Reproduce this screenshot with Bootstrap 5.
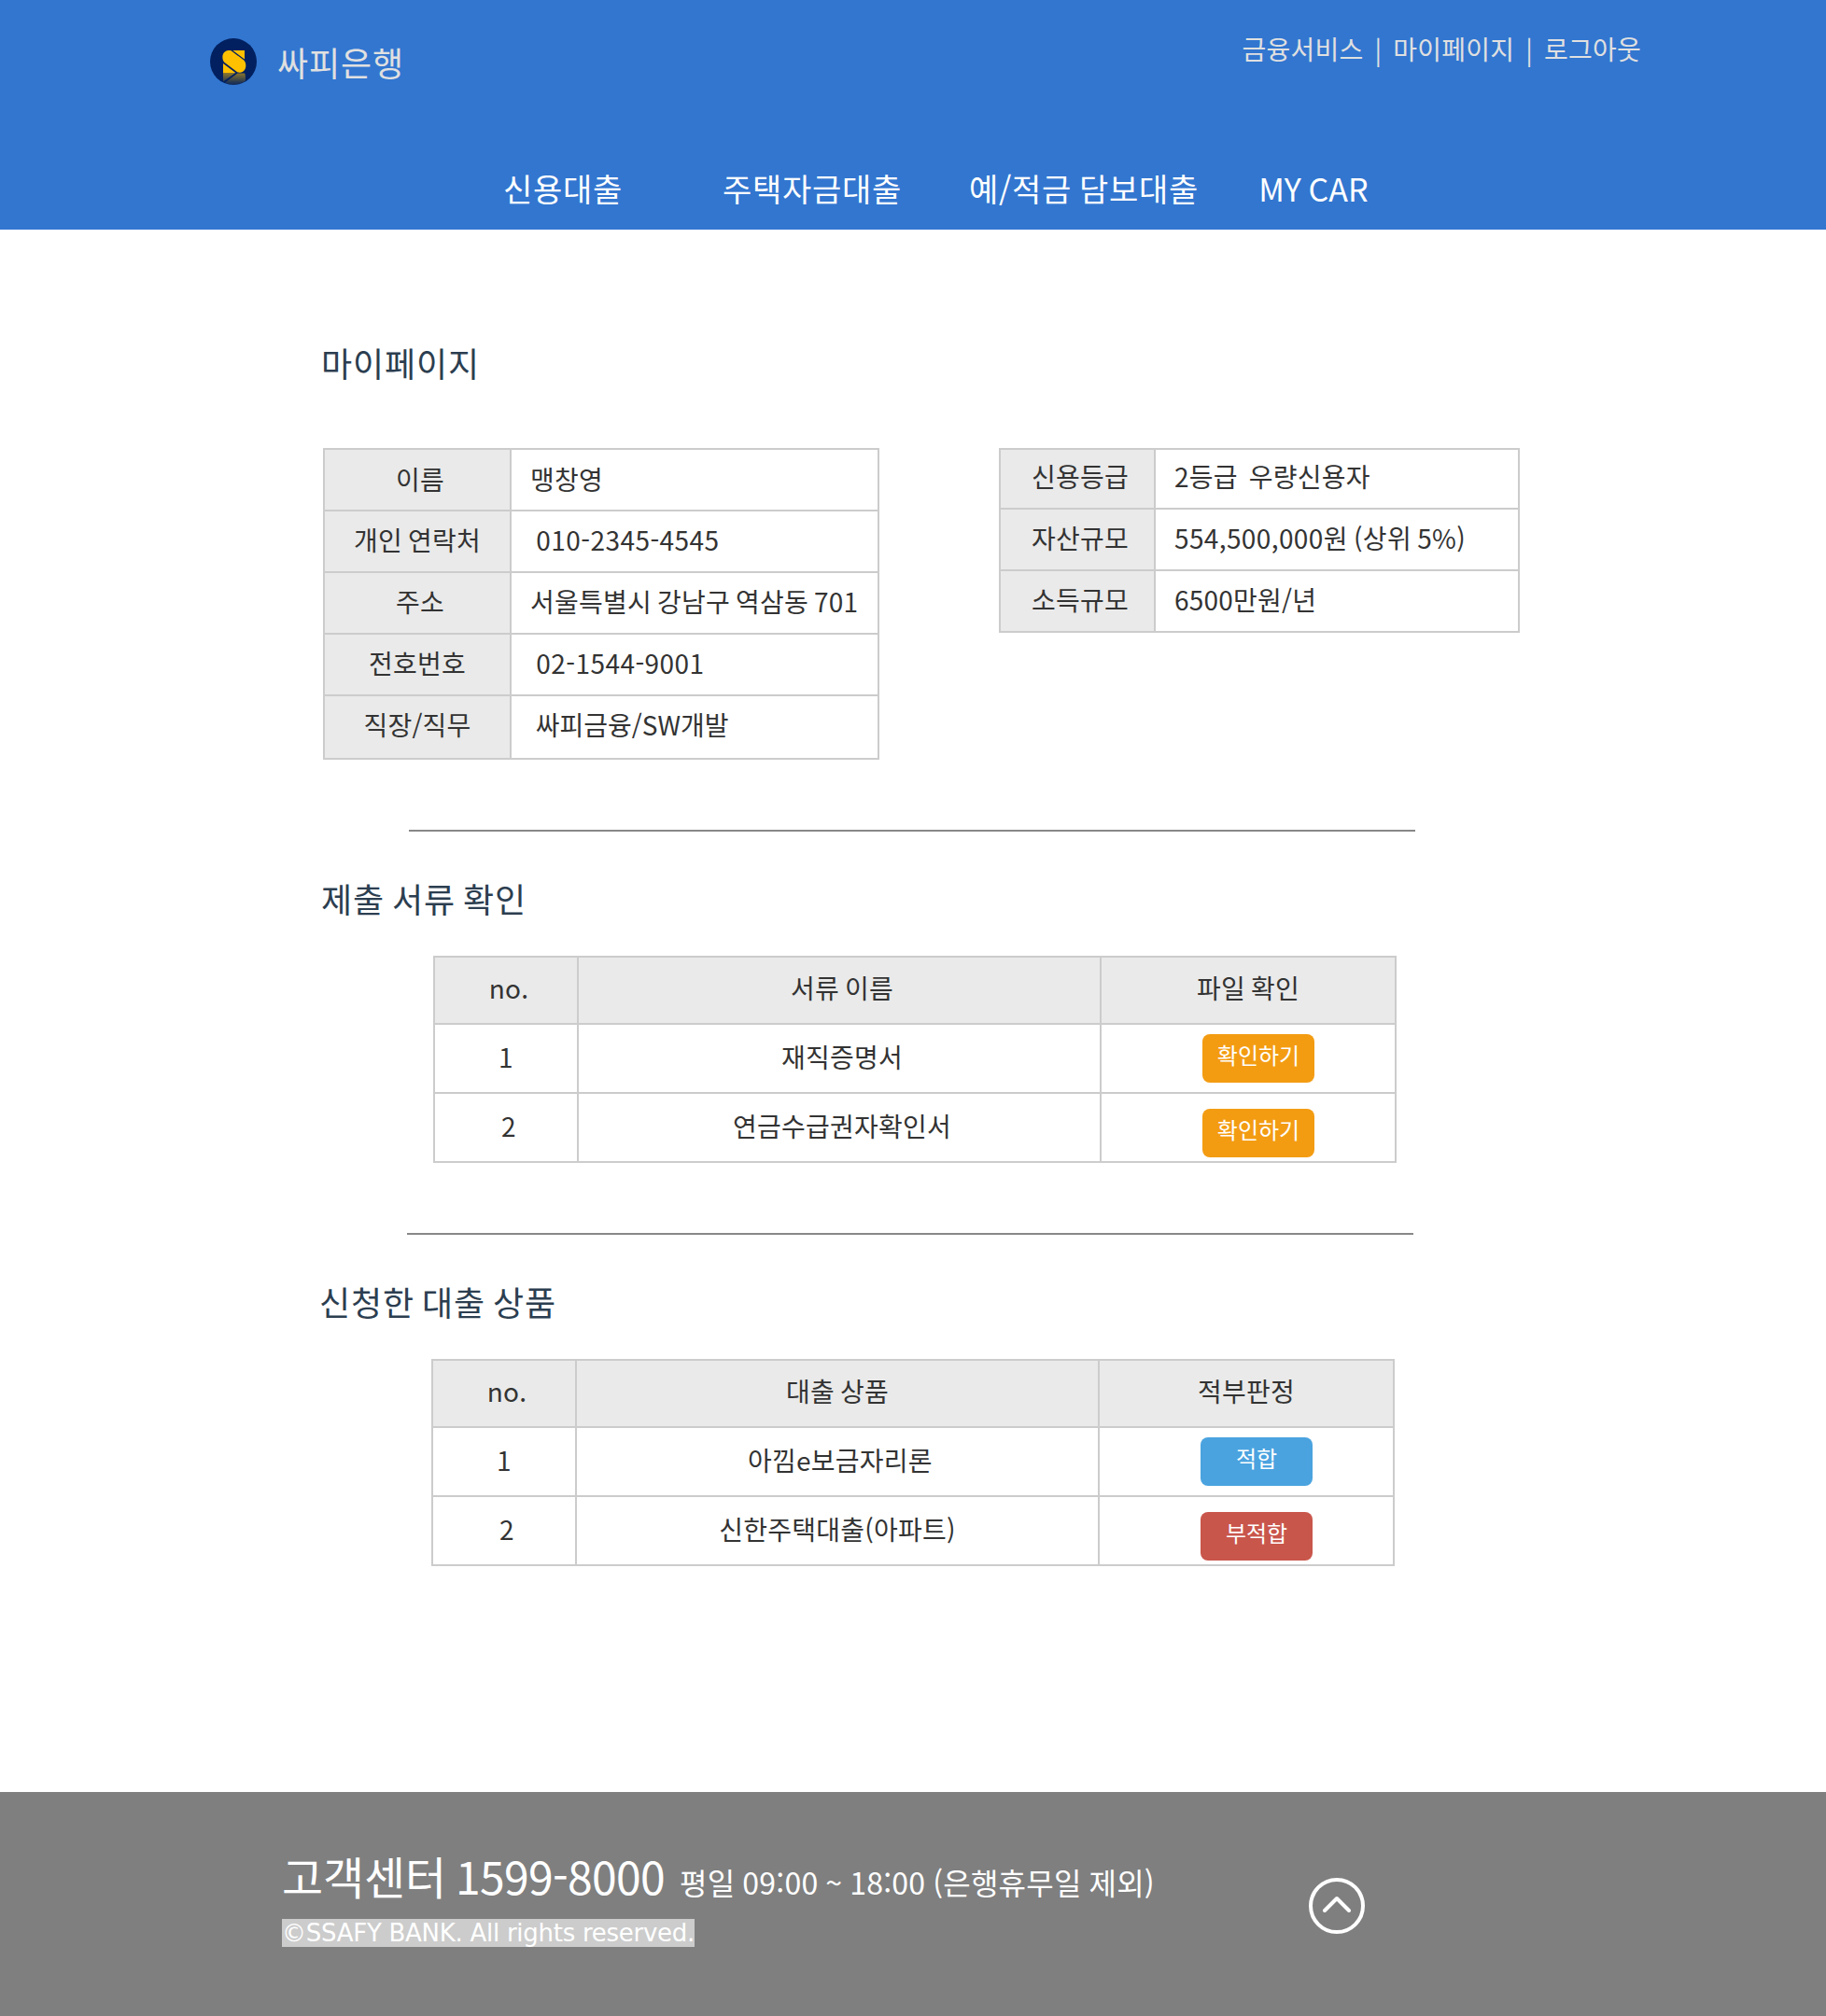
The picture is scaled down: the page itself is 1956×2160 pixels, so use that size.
<!DOCTYPE html>
<html lang="ko">
<head>
<meta charset="utf-8">
<title>싸피은행</title>
<meta name="viewport" content="width=device-width, initial-scale=1">
<link href="https://cdn.jsdelivr.net/npm/bootstrap@5.3.0/dist/css/bootstrap.min.css" rel="stylesheet">
<style>
body { font-family: "Noto Sans CJK KR", "Noto Sans", sans-serif; font-size: 28px; color: #333; background: #fff; }
a { color: inherit; }
.site-head { height: 246px; background: #3276d0; color: #fff; }
.brand-row { padding: 28px 198px 0 225px; height: 160px; }
.brand-link { gap: 22px; padding-top: 13px; height: 64px; color: #e0e0e0; font-size: 36px; line-height: 50px; letter-spacing: .88px; }
.top-links { color: #e0e0e0; line-height: 48px; white-space: pre; letter-spacing: .24px; word-spacing: -2.1px; }
.main-nav { padding-left: 539px; font-size: 34px; line-height: 84px; height: 84px; letter-spacing: .72px; word-spacing: -2.2px; white-space: nowrap; }
.nav-home { margin-left: 107px; }
.nav-deposit { margin-left: 72px; }
.nav-car { margin-left: 64px; letter-spacing: .1px; }
.page-main { height: 1674px; padding-left: 344px; }
.sec-title { font-size: 36px; line-height: 50px; color: #2c3e50; font-weight: 400; letter-spacing: .88px; word-spacing: -3px; margin: 46px 0 37px; }
.sec-title.first { margin: 0 0 67px; padding-top: 117px; }
.info-row { gap: 128px; padding-left: 2px; height: 334px; }
.rule { width: 1078px; height: 2px; background: #888; margin: 75px 0 0 94px; }
.shift { margin-left: -2px; }
.grid-table { border-collapse: collapse; table-layout: fixed; white-space: pre; line-height: 40px; letter-spacing: .24px; word-spacing: -2.1px; margin: 0; }
.grid-table td, .grid-table th { border: 2px solid #ccc; padding: 0 0 4px; font-weight: 400; vertical-align: middle; }
.grid-table th { background: #eaeaea; text-align: center; }
.info tr { height: 66px; }
.info td { padding-left: 20px; }
.person { width: 596px; }
.person tr:first-child > * { padding-bottom: 3px; }
.person tr:last-child { height: 68px; }
.person tr:last-child > * { padding-bottom: 6px; }
.credit { width: 558px; }
.credit tr:first-child { height: 64px; }
.credit tr:first-child > * { padding-bottom: 6px; }
.grid-table .num { letter-spacing: .46px; }
.grid-table .asset { letter-spacing: .38px; }
.grid-table .job { letter-spacing: 0; }
.list { width: 1032px; margin-left: 120px; }
.list td { text-align: center; height: 74px; }
.list th { height: 72px; padding-bottom: 7px; }
.list td.act { vertical-align: top; padding: 10px 0 0 108px; }
.list tr:last-child td.act { padding-top: 16px; }
.act .btn { width: 120px; height: 52px; border: 0; border-radius: 8px; color: #fff; font-size: 24px; line-height: 36px; padding: 4px 0 12px; display: block; letter-spacing: 0; }
.btn-orange { background: #f39c12; }
.btn-sky { background: #4aa3df; }
.btn-brick { background: #c9564b; }
.site-foot { height: 240px; background: #7f7f7f; color: #fff; padding: 54px 0 0 302px; }
.foot-text { width: 1100px; }
.tel { font-size: 48px; line-height: 70px; height: 82px; white-space: pre; letter-spacing: -.16px; word-spacing: -3.3px; }
.tel-num { letter-spacing: -.64px; }
.hours { font-size: 32px; letter-spacing: .23px; word-spacing: -1.3px; margin-left: 16px; }
.rights { font-family: "DejaVu Sans", sans-serif; font-size: 26px; line-height: 30px; letter-spacing: -.27px; background: #ccc; width: 442px; white-space: nowrap; }
.to-top { margin-top: 38px; width: 60px; height: 60px; line-height: 0; }
</style>
</head>
<body>
<header class="site-head">
  <div class="brand-row d-flex justify-content-between align-items-start">
    <a href="#" class="brand-link d-flex text-decoration-none">
      <svg width="50" height="50" viewBox="0 0 50 50">
        <defs>
          <linearGradient id="fade" x1="0" y1="37" x2="0" y2="48" gradientUnits="userSpaceOnUse"><stop offset="0" stop-color="#ffc000" stop-opacity=".55"/><stop offset="1" stop-color="#ffc000" stop-opacity=".1"/></linearGradient>
        </defs>
        <circle cx="25" cy="25" r="25" fill="#02205f"/>
        <path fill="#ffc000" d="M24.3 13H37v9.6zM22.5 13.2 36.5 23.8C40 28 38.5 36.3 32 36.8 30.5 36.8 29.8 36.6 28.5 35.800L15 25.500C11.500 20 14 13.500 19.500 13 21 12.900 21.800 12.900 22.500 13.200zM14 27v10h13.300z"/>
        <path fill="url(#fade)" d="M14 37h13.300L14 46.500zM16 47.500 29.500 37.500H37c1 1.500 1 3 1 8-7 5-15 5.500-22 2z"/>
      </svg>
      <span>싸피은행</span>
    </a>
    <div class="top-links"><a href="#" class="text-decoration-none">금융서비스</a>  |  <a href="#" class="text-decoration-none">마이페이지</a>  |  <a href="#" class="text-decoration-none">로그아웃</a></div>
  </div>
  <nav class="main-nav d-flex">
    <a href="#" class="text-decoration-none">신용대출</a>
    <a href="#" class="text-decoration-none nav-home">주택자금대출</a>
    <a href="#" class="text-decoration-none nav-deposit">예/적금 담보대출</a>
    <a href="#" class="text-decoration-none nav-car">MY CAR</a>
  </nav>
</header>
<main class="page-main">
  <h2 class="sec-title first">마이페이지</h2>
  <div class="info-row d-flex align-items-start">
    <table class="grid-table info person">
      <colgroup><col style="width:200px"><col></colgroup>
      <tr><th>&nbsp;이름</th><td>맹창영</td></tr>
      <tr><th>개인 연락처</th><td class="num">&nbsp;010-2345-4545</td></tr>
      <tr><th>&nbsp;주소</th><td>서울특별시 강남구 역삼동 701</td></tr>
      <tr><th>전호번호</th><td class="num">&nbsp;02-1544-9001</td></tr>
      <tr><th>직장/직무</th><td class="job">&nbsp;싸피금융/SW개발</td></tr>
    </table>
    <table class="grid-table info credit">
      <colgroup><col style="width:166px"><col></colgroup>
      <tr><th>&nbsp;신용등급</th><td>2등급&nbsp; 우량신용자</td></tr>
      <tr><th>&nbsp;자산규모</th><td class="asset">554,500,000원 (상위 5%)</td></tr>
      <tr><th>&nbsp;소득규모</th><td>6500만원/년</td></tr>
    </table>
  </div>
  <section>
    <div class="rule"></div>
    <h2 class="sec-title">제출 서류 확인</h2>
    <table class="grid-table list">
      <colgroup><col style="width:154px"><col style="width:560px"><col></colgroup>
      <tr><th>&nbsp;no.</th><th>&nbsp;서류 이름</th><th>파일 확인</th></tr>
      <tr><td>1</td><td>&nbsp;재직증명서</td><td class="act"><button class="btn btn-orange">확인하기</button></td></tr>
      <tr><td>&nbsp;2</td><td>&nbsp;연금수급권자확인서</td><td class="act"><button class="btn btn-orange">확인하기</button></td></tr>
    </table>
  </section>
  <section class="shift">
    <div class="rule"></div>
    <h2 class="sec-title">신청한 대출 상품</h2>
    <table class="grid-table list">
      <colgroup><col style="width:154px"><col style="width:560px"><col></colgroup>
      <tr><th>&nbsp;no.</th><th>대출 상품</th><th>적부판정</th></tr>
      <tr><td>1</td><td>&nbsp;아낌e보금자리론</td><td class="act"><button class="btn btn-sky">적합</button></td></tr>
      <tr><td>&nbsp;2</td><td>신한주택대출(아파트)</td><td class="act"><button class="btn btn-brick">부적합</button></td></tr>
    </table>
  </section>
</main>
<footer class="site-foot d-flex align-items-start">
  <div class="foot-text">
    <div class="tel">고객센터 <span class="tel-num">1599-8000</span><span class="hours">평일 09:00 ~ 18:00 (은행휴무일 제외)</span></div>
    <div class="rights">©SSAFY BANK. All rights reserved.</div>
  </div>
  <a href="#" class="to-top" aria-label="위로">
    <svg width="60" height="60" viewBox="0 0 60 60" fill="none" stroke="#fff" stroke-width="4" stroke-linecap="round" stroke-linejoin="round"><circle cx="30" cy="30" r="28"/><path d="M17 35 30 22 43 35"/></svg>
  </a>
</footer>
<script src="https://cdn.jsdelivr.net/npm/bootstrap@5.3.0/dist/js/bootstrap.bundle.min.js"></script>
</body>
</html>
